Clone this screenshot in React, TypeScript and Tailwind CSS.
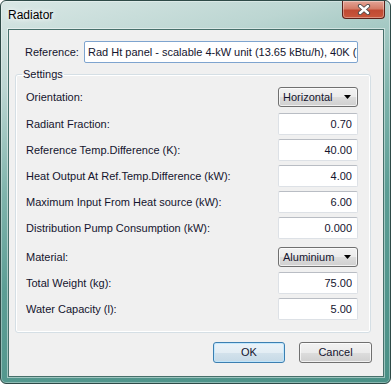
import React from "react"

const ui = "font-['Liberation_Sans',Arial,sans-serif] text-[11px] text-[#14142e]"

interface Row {
  label: string
  value: string
  combo?: boolean
  gap: string
}

const rows: Row[] = [
  { label: "Orientation:", value: "Horizontal", combo: true, gap: "" },
  { label: "Radiant Fraction:", value: "0.70", gap: "mt-[6px]" },
  { label: "Reference Temp.Difference (K):", value: "40.00", gap: "mt-[4px]" },
  { label: "Heat Output At Ref.Temp.Difference (kW):", value: "4.00", gap: "mt-[4px]" },
  { label: "Maximum Input From Heat source (kW):", value: "6.00", gap: "mt-[4px]" },
  { label: "Distribution Pump Consumption (kW):", value: "0.000", gap: "mt-[4px]" },
  { label: "Material:", value: "Aluminium", combo: true, gap: "mt-[8px]" },
  { label: "Total Weight (kg):", value: "75.00", gap: "mt-[5px]" },
  { label: "Water Capacity (l):", value: "5.00", gap: "mt-[4px]" },
]

function Combo({ value }: { value: string }) {
  return (
    <div className="h-[20px] w-[80px] flex items-center justify-between rounded-[3px] border border-[#707070] bg-[linear-gradient(#f2f2f2_0%,#ebebeb_50%,#dddddd_51%,#cfcfcf_100%)] pl-[4px] pr-[6px] shadow-[inset_0_0_0_1px_rgba(255,255,255,0.7)]">
      <span>{value}</span>
      <svg width="7" height="4" viewBox="0 0 7 4">
        <path d="M0 0 H7 L3.5 4 Z" fill="#000" />
      </svg>
    </div>
  )
}

function Field({ value }: { value: string }) {
  return (
    <input
      readOnly
      value={value}
      className={`${ui} h-[22px] w-[80px] rounded-[2px] border border-[#dde1e6] border-t-[#b9bdc4] bg-white pr-[5px] text-right outline-none`}
    />
  )
}

function Button({ label, primary }: { label: string; primary?: boolean }) {
  return (
    <button
      className={
        primary
          ? "h-[21px] w-[72px] rounded-[3px] border border-[#3c7fb1] bg-[linear-gradient(#eaf3f9_0%,#e3edf4_50%,#d3e2ec_51%,#c6d9e6_100%)] shadow-[inset_0_0_0_1px_rgba(190,230,253,0.9)]"
          : "h-[21px] w-[73px] rounded-[3px] border border-[#707070] bg-[linear-gradient(#f2f2f2_0%,#ebebeb_50%,#dddddd_51%,#cfcfcf_100%)] shadow-[inset_0_0_0_1px_rgba(255,255,255,0.7)]"
      }
    >
      {label}
    </button>
  )
}

export default function App() {
  return (
    <div className="w-[391px] h-[384px] flex flex-col rounded-[6px] border border-[#2e4a47] bg-[linear-gradient(165deg,#d9e7e5_0%,#bcd6d2_18%,#7fb4ac_40%,#5c9e95_60%,#4a9086_100%)] shadow-[inset_0_0_0_1px_rgba(255,255,255,0.35)] overflow-hidden">
      <div className="h-[28px] flex items-start">
        <span className="ml-[7px] mt-[5px] font-['Liberation_Sans',Arial,sans-serif] text-[12px] text-black [text-shadow:0_0_8px_#fff,0_0_4px_#fff]">
          Radiator
        </span>
        <div className="ml-auto mr-[5px] h-[18px] w-[43px] flex items-center justify-center rounded-b-[4px] border border-t-0 border-[#5b211a] bg-[linear-gradient(#e3a496_0%,#d47c67_45%,#c04a33_55%,#c9573c_100%)] shadow-[inset_0_0_0_1px_rgba(255,255,255,0.35)]">
          <svg width="14" height="11" viewBox="0 0 14 11">
            <path d="M3 2 L11 9 M11 2 L3 9" stroke="#4a4a4a" strokeWidth="4.2" strokeLinecap="round" />
            <path d="M3 2 L11 9 M11 2 L3 9" stroke="#fff" strokeWidth="2.4" strokeLinecap="round" />
          </svg>
        </div>
      </div>

      <div className={`${ui} ml-[7px] mr-[6px] mb-[6px] flex-1 flex flex-col border border-[#47706b] bg-[#f0f0f0] shadow-[0_0_0_1px_rgba(255,255,255,0.45)]`}>
        <div className="mt-[11px] flex items-center">
          <span className="w-[59px] pl-[16px] box-content">Reference:</span>
          <div className="h-[22px] w-[274px] flex items-center overflow-hidden whitespace-nowrap rounded-[2px] border border-[#7ea4cf] bg-white pl-[3px]">
            Rad Ht panel - scalable 4-kW unit (13.65 kBtu/h), 40K (72°F)
          </div>
        </div>

        <fieldset className="mt-[4px] ml-[6px] w-[356px] rounded-[3px] border border-[#d5dfe5] pl-[10px] pr-[12px] pt-[6px] pb-[12px] shadow-[inset_0_0_0_1px_#fff]">
          <legend className="-ml-[4px] px-[1px] leading-[14px]">Settings</legend>
          <div className="flex flex-col">
            {rows.map((r) => (
              <div key={r.label} className={`${r.gap} flex items-center justify-between`}>
                <span>{r.label}</span>
                {r.combo ? <Combo value={r.value} /> : <Field value={r.value} />}
              </div>
            ))}
          </div>
        </fieldset>

        <div className="mt-[9px] mr-[11px] flex justify-end gap-[14px]">
          <Button label="OK" primary />
          <Button label="Cancel" />
        </div>
      </div>
    </div>
  )
}
